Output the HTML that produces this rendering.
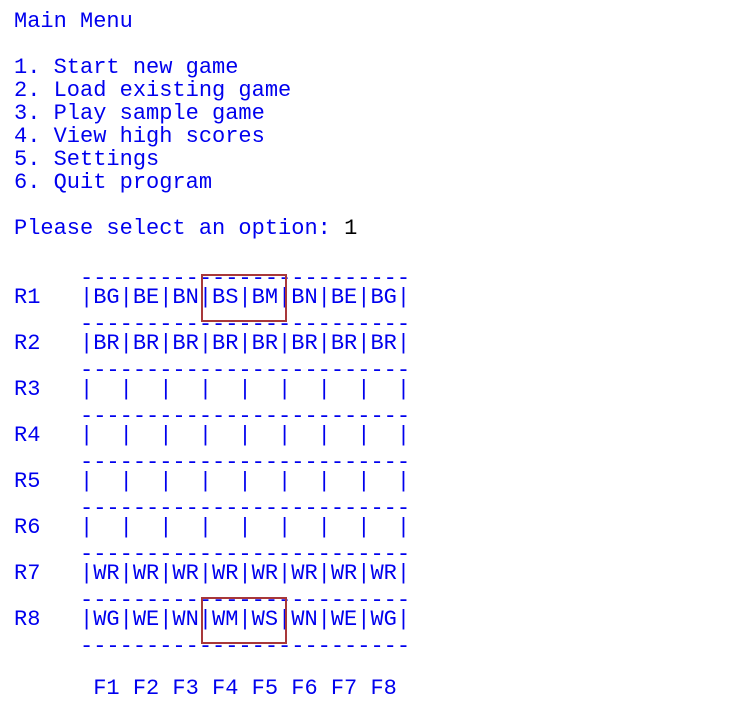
<!DOCTYPE html>
<html><head><meta charset="utf-8"><style>
html,body{margin:0;padding:0;background:#fff;width:734px;height:718px;overflow:hidden}
pre{position:absolute;left:14px;top:10px;margin:0;font-family:"Liberation Mono","Courier New",monospace;font-size:22px;line-height:23px;color:#0000ee;letter-spacing:0}
.k{color:#000}
.d{position:relative;top:4px}
.box{position:absolute;border:2px solid #a8383a;box-sizing:border-box}
</style></head><body>
<pre>Main Menu

1. Start new game
2. Load existing game
3. Play sample game
4. View high scores
5. Settings
6. Quit program

Please select an option: <span class="k">1</span>

<span class="d">     -------------------------</span>
R1   |BG|BE|BN|BS|BM|BN|BE|BG|
<span class="d">     -------------------------</span>
R2   |BR|BR|BR|BR|BR|BR|BR|BR|
<span class="d">     -------------------------</span>
R3   |  |  |  |  |  |  |  |  |
<span class="d">     -------------------------</span>
R4   |  |  |  |  |  |  |  |  |
<span class="d">     -------------------------</span>
R5   |  |  |  |  |  |  |  |  |
<span class="d">     -------------------------</span>
R6   |  |  |  |  |  |  |  |  |
<span class="d">     -------------------------</span>
R7   |WR|WR|WR|WR|WR|WR|WR|WR|
<span class="d">     -------------------------</span>
R8   |WG|WE|WN|WM|WS|WN|WE|WG|
<span class="d">     -------------------------</span>

      F1 F2 F3 F4 F5 F6 F7 F8</pre>
<div class="box" style="left:201px;top:274px;width:86px;height:48px"></div>
<div class="box" style="left:201px;top:597px;width:86px;height:47px"></div>
</body></html>
